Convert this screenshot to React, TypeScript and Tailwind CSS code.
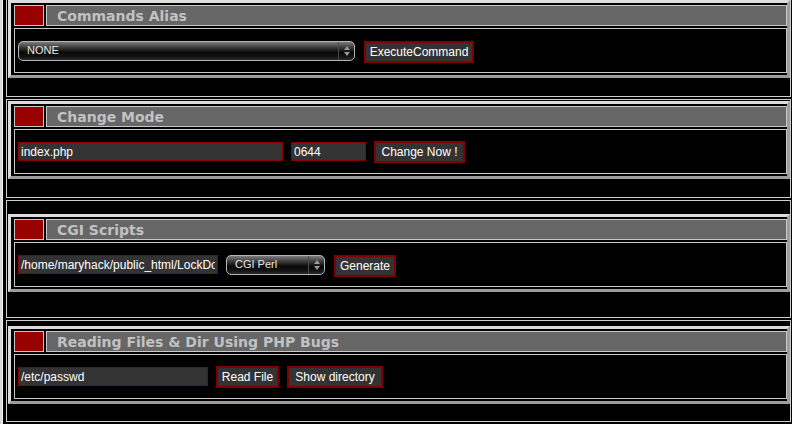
import React from "react";

const sans = { fontFamily: '"Liberation Sans", Arial, sans-serif' };
const title = { fontFamily: '"DejaVu Sans", Verdana, sans-serif' };

function Section({
  heading,
  boxClass,
  children,
}: {
  heading: string;
  boxClass: string;
  children: React.ReactNode;
}) {
  return (
    <div className={boxClass}>
      <div className="ml-[1px] border-[3px] border-t-[#dcdcdc] border-l-[#dcdcdc] border-b-[#9d9d9d] border-r-[#9d9d9d] pt-[2px] pl-[3px] pb-[2px] flex flex-col gap-[2px]">
        <div className="flex gap-[2px] h-[21px]">
          <div className="w-[30px] bg-[#990000] border border-[#c8c8c8]" />
          <div
            className="flex-1 bg-[#666666] border border-[#c8c8c8] flex items-center pl-[10px] font-bold text-[14px] text-[#c2c2c2] leading-none"
            style={title}
          >
            {heading}
          </div>
        </div>
        <div className="h-[45px] border border-[#c8c8c8] bg-black flex items-center pl-[3px] gap-[8px]">
          {children}
        </div>
      </div>
    </div>
  );
}

function Select({ w, text }: { w: string; text: string }) {
  return (
    <div
      className={`${w} h-[20px] rounded-[5px] border border-[#b4b4b4] bg-[linear-gradient(to_bottom,#7c7c7c_0%,#3c3c3c_30%,#080808_58%,#121212_80%,#2a2a2a_100%)] flex items-center overflow-hidden`}
      style={sans}
    >
      <span className="flex-1 pl-[8px] text-[11px] text-[#e6e6e6] leading-none">{text}</span>
      <div className="w-[16px] h-full border-l border-[#4a4a4a] flex flex-col items-center justify-center gap-[2px]">
        <svg width="6" height="4" viewBox="0 0 6 4">
          <polygon points="3,0 6,4 0,4" fill="#9a9a9a" />
        </svg>
        <svg width="6" height="4" viewBox="0 0 6 4">
          <polygon points="0,0 6,0 3,4" fill="#9a9a9a" />
        </svg>
      </div>
    </div>
  );
}

function Input({ w, value }: { w: string; value: string }) {
  return (
    <input
      readOnly
      value={value}
      className={`${w} h-[19px] border border-[#8a0000] bg-[#333333] text-[12px] text-white px-[2px] outline-none`}
      style={sans}
    />
  );
}

function Btn({ w, label }: { w: string; label: string }) {
  return (
    <button
      className={`${w} h-[22px] border-2 border-[#7e0000] bg-[#333333] text-[12px] text-white leading-none`}
      style={sans}
    >
      {label}
    </button>
  );
}

export default function App() {
  return (
    <div className="w-[792px] h-[424px] bg-black flex overflow-hidden">
      <div className="w-[2px] h-full bg-[#d8d8d8]" />
      <div className="w-[1px] h-full bg-[#f2f2f2]" />
      <div className="flex-1 ml-[3px] mr-[1px] flex flex-col gap-[2px]">
        <div className="-mt-[1px]">
          <Section
            heading="Commands Alias"
            boxClass="border border-[#cfcfcf] pt-0 pb-[18px]"
          >
            <Select w="w-[337px]" text="NONE" />
            <div className="ml-[1px]">
              <Btn w="w-[110px]" label="ExecuteCommand" />
            </div>
          </Section>
        </div>
        <Section
          heading="Change Mode"
          boxClass="border border-[#cfcfcf] pt-[1px] pb-[18px]"
        >
          <Input w="w-[265px]" value="index.php" />
          <Input w="w-[75px]" value="0644" />
          <Btn w="w-[91px]" label="Change Now !" />
        </Section>
        <Section
          heading="CGI Scripts"
          boxClass="border border-[#cfcfcf] pt-[13px] pb-[25px]"
        >
          <Input w="w-[200px]" value="/home/maryhack/public_html/LockDoor/" />
          <Select w="w-[99px]" text="CGI Perl" />
          <div className="ml-[1px]">
            <Btn w="w-[62px]" label="Generate" />
          </div>
        </Section>
        <Section
          heading="Reading Files & Dir Using PHP Bugs"
          boxClass="border border-[#cfcfcf] pt-[5px] pb-[17px]"
        >
          <Input w="w-[190px]" value="/etc/passwd" />
          <Btn w="w-[63px]" label="Read File" />
          <Btn w="w-[96px]" label="Show directory" />
        </Section>
      </div>
    </div>
  );
}
